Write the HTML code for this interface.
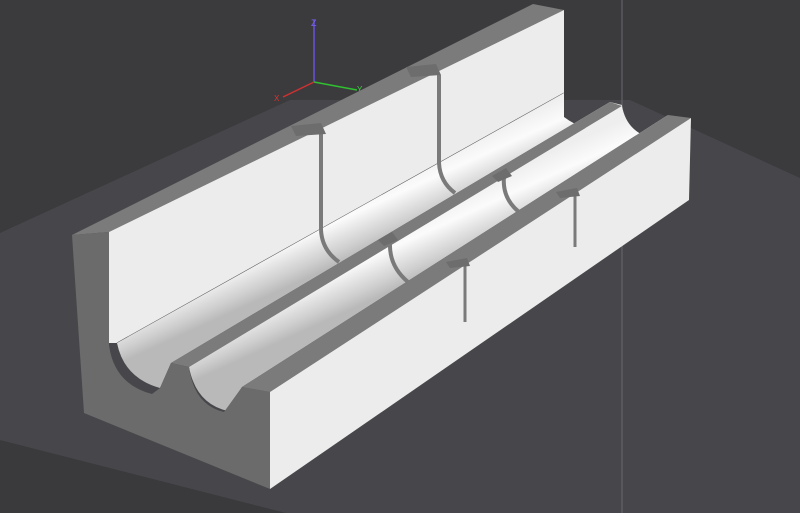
<!DOCTYPE html>
<html><head><meta charset="utf-8"><style>
html,body{margin:0;padding:0;background:#3b3b3e;}
svg{display:block}
</style></head><body>
<svg width="800" height="513" viewBox="0 0 800 513" xmlns="http://www.w3.org/2000/svg">
<defs>
<linearGradient id="g1" gradientUnits="userSpaceOnUse" x1="300" y1="215" x2="325" y2="270">
<stop offset="0" stop-color="#eeeeee"/><stop offset="0.35" stop-color="#fbfbfb"/><stop offset="0.6" stop-color="#e2e2e2"/><stop offset="0.8" stop-color="#cfcfcf"/><stop offset="1" stop-color="#b9b9b9"/>
</linearGradient>
<linearGradient id="g2" gradientUnits="userSpaceOnUse" x1="380" y1="230" x2="405" y2="285">
<stop offset="0" stop-color="#eeeeee"/><stop offset="0.35" stop-color="#fbfbfb"/><stop offset="0.6" stop-color="#e2e2e2"/><stop offset="0.8" stop-color="#cfcfcf"/><stop offset="1" stop-color="#b9b9b9"/>
</linearGradient>
</defs>
<rect width="800" height="513" fill="#3b3b3e"/>
<polygon points="0,233 290,100 630,100 800,178 800,513 0,513" fill="#47474b"/>
<polygon points="0,440 286,513 0,513" fill="#3a3a3d"/>
<line x1="622" y1="0" x2="622" y2="513" stroke="#6a6a6e" stroke-width="1"/>
<!-- axis gizmo -->
<line x1="314" y1="82" x2="314" y2="20" stroke="#6a50e0" stroke-width="1.5"/>
<text x="311" y="26" font-family="Liberation Sans,sans-serif" font-size="9" fill="#7a60f0">Z</text>
<line x1="314" y1="82" x2="357" y2="90" stroke="#30c030" stroke-width="1.5"/>
<text x="357" y="92" font-family="Liberation Sans,sans-serif" font-size="8" fill="#40d040">Y</text>
<line x1="314" y1="82" x2="283" y2="97" stroke="#d03030" stroke-width="1.5"/>
<text x="274" y="101" font-family="Liberation Sans,sans-serif" font-size="8" fill="#e03030">X</text>
<!-- back wall top -->
<polygon points="72,235 533,4 564,10 109,232" fill="#7b7b7b"/>
<!-- back wall face -->
<polygon points="109,232 564,10 564,93 117,343 109,343" fill="#ececec"/>
<line x1="117" y1="343" x2="564" y2="93" stroke="#555" stroke-width="1"/>
<!-- groove 1 -->
<path d="M117,343 L564,93 L564,117 Q585,133 622,134 L622,105 L610,102 L171,363 L160,388 Q124,378 117,343 Z" fill="url(#g1)"/>
<!-- rib top -->
<polygon points="171,363 610,102 622,106 189,367" fill="#7b7b7b"/>
<!-- groove 2 -->
<path d="M189,367 L622,106 Q626,128 645,136 L668,115 L242,387 L228,411 Q196,404 189,367 Z" fill="url(#g2)"/>
<!-- left end face -->
<path d="M72,235 L109,232 L109,345 Q114,384 152,394 L160,388 L171,363 L189,367 Q194,405 224,412 L242,387 L270,392 L270,489 L84,413 Z" fill="#6b6b6b"/>
<!-- front block top -->
<polygon points="242,387 668,115 691,118 270,392" fill="#7b7b7b"/>
<!-- front face -->
<polygon points="270,392 691,118 689,200 270,489" fill="#ececec"/>
<!-- slots -->
<line x1="321" y1="133" x2="321" y2="230" stroke="#7a7a7a" stroke-width="4"/>
<path d="M321,230 Q322,250 339,262" stroke="#7a7a7a" stroke-width="4" fill="none"/>
<line x1="439" y1="75" x2="439" y2="163" stroke="#7a7a7a" stroke-width="4"/>
<path d="M439,163 Q440,182 455,193" stroke="#7a7a7a" stroke-width="4" fill="none"/>
<path d="M390,243 Q389,266 408,282" stroke="#7a7a7a" stroke-width="4" fill="none"/>
<path d="M504,177 Q502,198 519,212" stroke="#7a7a7a" stroke-width="4" fill="none"/>
<line x1="465" y1="262" x2="465" y2="322" stroke="#7a7a7a" stroke-width="3"/>
<line x1="575" y1="192" x2="575" y2="247" stroke="#7a7a7a" stroke-width="3"/>
<!-- notches on tops -->
<polygon points="291,126 321,123 326,134 296,136" fill="#6d6d6d"/>
<polygon points="406,67 436,64 441,75 411,77" fill="#6d6d6d"/>
<polygon points="378,240 392,232 398,240 384,246" fill="#6d6d6d"/>
<polygon points="446,262 467,258 470,266 450,268" fill="#6d6d6d"/>
<polygon points="492,176 506,168 512,176 498,182" fill="#6d6d6d"/>
<polygon points="556,192 577,188 580,196 560,198" fill="#6d6d6d"/>
</svg>
</body></html>
